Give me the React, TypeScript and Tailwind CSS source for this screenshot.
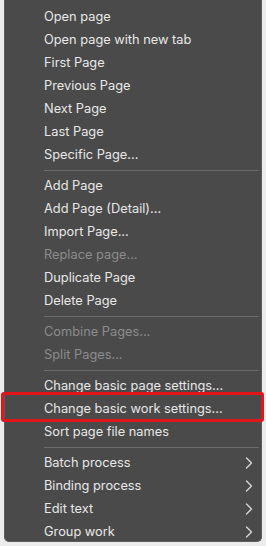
type Item = { label: string; disabled?: boolean; sub?: boolean; boxed?: boolean };

const GROUPS: Item[][] = [
  [
    { label: "Open page" },
    { label: "Open page with new tab" },
    { label: "First Page" },
    { label: "Previous Page" },
    { label: "Next Page" },
    { label: "Last Page" },
    { label: "Specific Page..." },
  ],
  [
    { label: "Add Page" },
    { label: "Add Page (Detail)..." },
    { label: "Import Page..." },
    { label: "Replace page...", disabled: true },
    { label: "Duplicate Page" },
    { label: "Delete Page" },
  ],
  [
    { label: "Combine Pages...", disabled: true },
    { label: "Split Pages...", disabled: true },
  ],
  [
    { label: "Change basic page settings..." },
    { label: "Change basic work settings...", boxed: true },
    { label: "Sort page file names" },
  ],
  [
    { label: "Batch process", sub: true },
    { label: "Binding process", sub: true },
    { label: "Edit text", sub: true },
    { label: "Group work", sub: true },
  ],
];

function Chevron() {
  return (
    <svg width="8" height="12" viewBox="0 0 8 12" fill="none" className="text-[#d6d6d6]">
      <path d="M1.5 1 L6.5 6 L1.5 11" stroke="currentColor" strokeWidth="1.4" strokeLinecap="round" strokeLinejoin="round" />
    </svg>
  );
}

function Row({ item }: { item: Item }) {
  return (
    <div className="relative flex h-[23px] items-center pl-[39px] pr-[8px]">
      {item.boxed && (
        <div className="pointer-events-none absolute left-[-4px] right-[-3px] top-[-5px] bottom-[-2px] rounded-[3px] border-[3px] border-[#e0161b]" />
      )}
      <span className={item.disabled ? "flex-1 text-[#8c8c8c]" : "flex-1 text-[#e8e8e8]"}>
        {item.label}
      </span>
      {item.sub && <Chevron />}
    </div>
  );
}

export default function App() {
  return (
    <div
      className="h-[546px] w-[266px] bg-[#ececec] px-[4px] pb-[4px]"
      style={{ fontFamily: "Inter, 'Liberation Sans', sans-serif" }}
    >
      <div className="flex h-full flex-col rounded-b-[5px] border border-t-0 border-[#5c5c5c] bg-[#4a4a4a] pt-[5px] text-[12.8px]">
        {GROUPS.map((group, gi) => (
          <div key={gi}>
            {gi > 0 && (
              <div className="flex h-[8px] items-center pl-[39px] pr-[2px]">
                <div className="h-px flex-1 bg-[#6b6b6b]" />
              </div>
            )}
            {group.map((item) => (
              <Row key={item.label} item={item} />
            ))}
          </div>
        ))}
      </div>
    </div>
  );
}
